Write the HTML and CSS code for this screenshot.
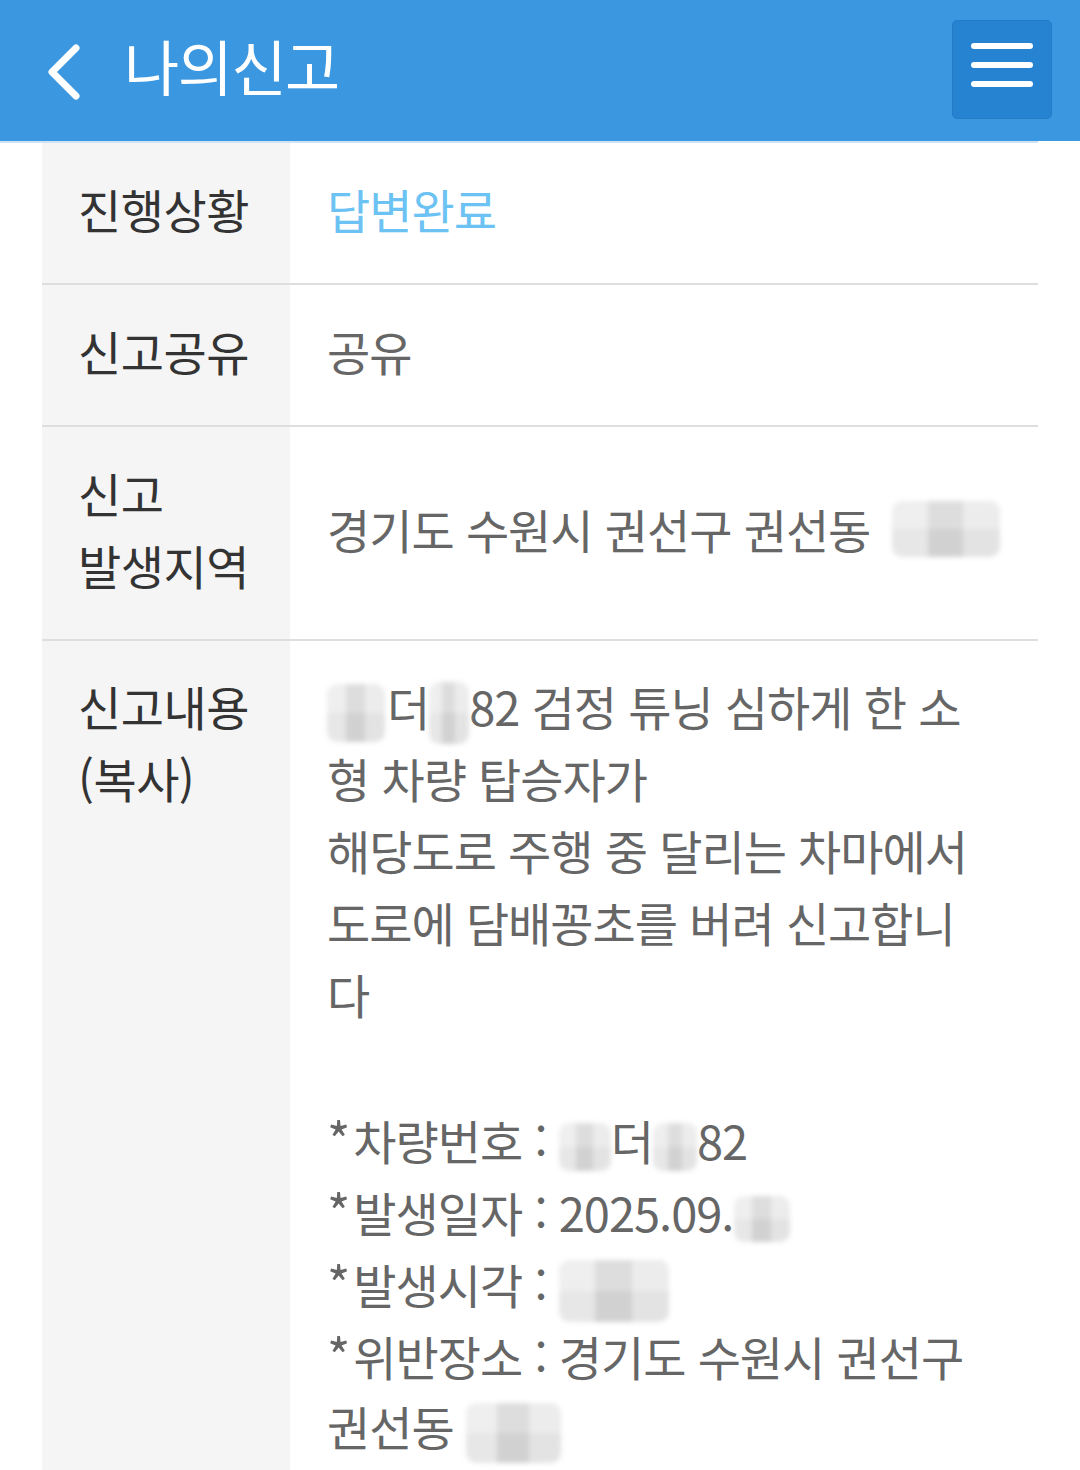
FILE: index.html
```html
<!DOCTYPE html>
<html lang="ko">
<head>
<meta charset="utf-8">
<title>나의신고</title>
<link rel="stylesheet" href="styles.css">
</head>
<body>
<header class="topbar">
  <div class="topbar-left">
    <svg class="back" viewBox="0 0 40 60" width="40" height="60" aria-hidden="true">
      <polyline points="32,6 8,30 32,54" fill="none" stroke="#fff" stroke-width="7" stroke-linecap="round" stroke-linejoin="round"/>
    </svg>
    <h1 class="title">나의신고</h1>
  </div>
  <button class="menu-btn" aria-label="메뉴">
    <span class="bar"></span><span class="bar"></span><span class="bar"></span>
  </button>
</header>

<main class="detail">
  <div class="row row-short">
    <div class="label">진행상황</div>
    <div class="value status">답변완료</div>
  </div>
  <div class="row row-short">
    <div class="label">신고공유</div>
    <div class="value">공유</div>
  </div>
  <div class="row row-mid">
    <div class="label"><div>신고</div><div>발생지역</div></div>
    <div class="value"><span>경기도 수원시 권선구 권선동</span><span class="blur b-addr"></span></div>
  </div>
  <div class="row row-long">
    <div class="label"><div>신고내용</div><div>(복사)</div></div>
    <div class="value content">
      <div class="line"><span class="blur b-a"></span>더<span class="blur b-b"></span>82 검정 튜닝 심하게 한 소</div>
      <div class="line">형 차량 탑승자가</div>
      <div class="line">해당도로 주행 중 달리는 차마에서</div>
      <div class="line">도로에 담배꽁초를 버려 신고합니</div>
      <div class="line">다</div>
      <div class="line">&nbsp;</div>
      <div class="line"><span class="ast">*</span>차량번호 : <span class="blur b-c"></span>더<span class="blur b-d"></span>82</div>
      <div class="line"><span class="ast">*</span>발생일자 : 2025.09.<span class="blur b-e"></span></div>
      <div class="line"><span class="ast">*</span>발생시각 : <span class="blur b-f"></span></div>
      <div class="line"><span class="ast">*</span>위반장소 : 경기도 수원시 권선구</div>
      <div class="line">권선동 <span class="blur b-g"></span></div>
    </div>
  </div>
</main>
</body>
</html>
```

FILE: styles.css
```css
html, body {
  margin: 0;
  padding: 0;
  background: #fff;
}
body {
  font-family: "Noto Sans CJK KR", "Noto Sans", sans-serif;
  width: 1080px;
  height: 1470px;
  overflow: hidden;
}

.topbar {
  height: 141px;
  background: #3a97e0;
  display: flex;
  align-items: center;
  justify-content: space-between;
  padding: 0 28px 0 44px;
  box-sizing: border-box;
  position: relative;
}
.topbar::after {
  content: "";
  position: absolute;
  left: 0;
  bottom: -2px;
  width: 1038px;
  height: 2px;
  background: #cfe3f5;
}
.topbar-left {
  display: flex;
  align-items: center;
  gap: 40px;
}
.back {
  display: block;
  margin-top: 2px;
}
.title {
  margin: 0;
  color: #fff;
  font-size: 60px;
  font-weight: 400;
  letter-spacing: -1.5px;
  line-height: 1;
  margin-top: -12px;
}
.menu-btn {
  width: 100px;
  height: 99px;
  margin-top: -2px;
  background: #2683d2;
  border: 1px solid #237bc6;
  border-radius: 5px;
  display: flex;
  flex-direction: column;
  align-items: center;
  justify-content: center;
  gap: 13px;
  padding: 0 0 10px 0;
  box-sizing: border-box;
}
.menu-btn .bar {
  display: block;
  width: 62px;
  height: 6px;
  border-radius: 3px;
  background: #fff;
}

.detail {
  margin: 2px 42px 0 42px;
}
.row {
  display: flex;
  border-bottom: 2px solid #dedede;
}
.label {
  width: 248px;
  flex: none;
  background: #f5f5f5;
  box-sizing: border-box;
  padding-left: 36px;
  padding-bottom: 8px;
  color: #333;
  font-size: 47px;
  letter-spacing: -0.5px;
  line-height: 72px;
  display: flex;
  flex-direction: column;
  justify-content: center;
}
.value {
  flex: 1;
  box-sizing: border-box;
  padding-left: 37px;
  padding-bottom: 8px;
  color: #666;
  font-size: 47px;
  letter-spacing: -1px;
  line-height: 72px;
  display: flex;
  align-items: center;
  white-space: nowrap;
}
.status {
  color: #6cc3f3;
}
.row-short {
  height: 140px;
}
.row-mid {
  height: 212px;
}
.row-long {
  border-bottom: none;
}
.row-long .label {
  justify-content: flex-start;
  padding-top: 29px;
  padding-bottom: 60px;
}
.row-long .value {
  display: block;
  padding-top: 29px;
  padding-bottom: 60px;
}
.line {
  height: 72px;
}
.ast {
  display: inline-block;
  font-size: 50px;
  margin-right: 4px;
}

.blur {
  display: inline-block;
  vertical-align: middle;
  filter: blur(2.5px);
  border-radius: 10px;
  background:
    linear-gradient(90deg, rgba(255,255,255,0.35) 0 33%, rgba(0,0,0,0.04) 33% 66%, rgba(255,255,255,0.25) 66%),
    linear-gradient(180deg, #e6e6e6 0 50%, #dadada 50%);
}
.b-addr { width: 108px; height: 56px; margin-left: 22px; }
.b-a { width: 58px; height: 58px; margin-right: 2px; }
.b-b { width: 40px; height: 62px; }
.b-c { width: 52px; height: 48px; }
.b-d { width: 44px; height: 48px; }
.b-e { width: 56px; height: 46px; }
.b-f { width: 110px; height: 62px; }
.b-g { width: 95px; height: 60px; }
```
